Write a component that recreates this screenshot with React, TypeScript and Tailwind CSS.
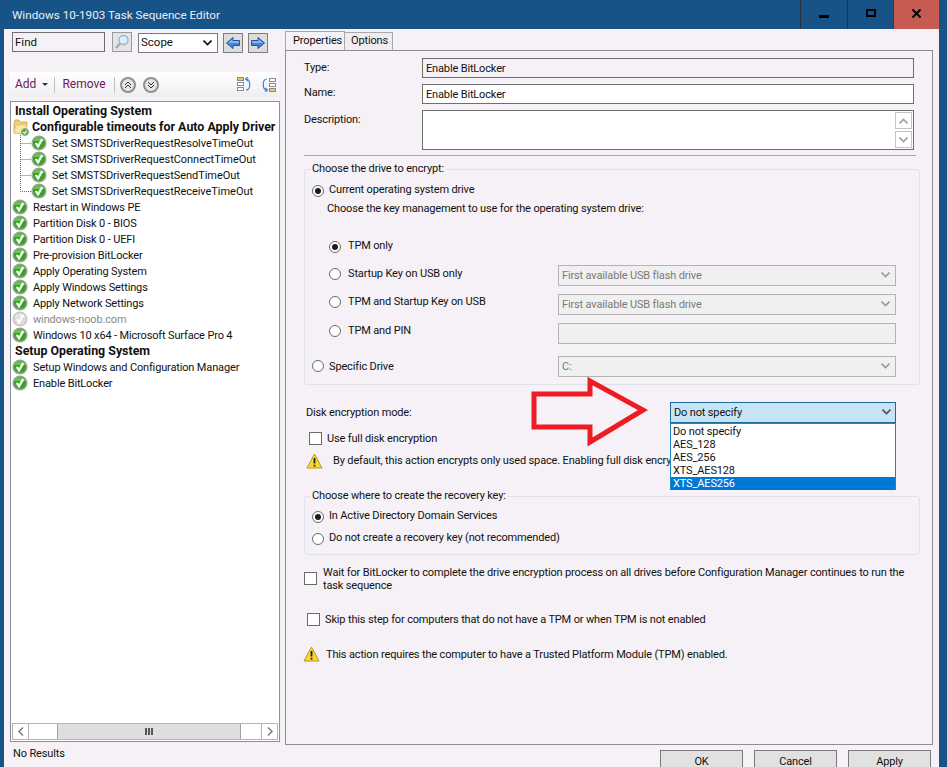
import { ReactNode } from 'react'

const TREE: { label: string; kind: 'head' | 'folder' | 'child' | 'item' | 'off'; last?: boolean }[] = [
  { label: 'Install Operating System', kind: 'head' },
  { label: 'Configurable timeouts for Auto Apply Driver', kind: 'folder' },
  { label: 'Set SMSTSDriverRequestResolveTimeOut', kind: 'child' },
  { label: 'Set SMSTSDriverRequestConnectTimeOut', kind: 'child' },
  { label: 'Set SMSTSDriverRequestSendTimeOut', kind: 'child' },
  { label: 'Set SMSTSDriverRequestReceiveTimeOut', kind: 'child', last: true },
  { label: 'Restart in Windows PE', kind: 'item' },
  { label: 'Partition Disk 0 - BIOS', kind: 'item' },
  { label: 'Partition Disk 0 - UEFI', kind: 'item' },
  { label: 'Pre-provision BitLocker', kind: 'item' },
  { label: 'Apply Operating System', kind: 'item' },
  { label: 'Apply Windows Settings', kind: 'item' },
  { label: 'Apply Network Settings', kind: 'item' },
  { label: 'windows-noob.com', kind: 'off' },
  { label: 'Windows 10 x64 - Microsoft Surface Pro 4', kind: 'item' },
  { label: 'Setup Operating System', kind: 'head' },
  { label: 'Setup Windows and Configuration Manager', kind: 'item' },
  { label: 'Enable BitLocker', kind: 'item' },
]

function CheckIcon({ off }: { off?: boolean }) {
  return (
    <svg width="16" height="16" viewBox="0 0 16 16" className="shrink-0">
      <circle cx="8" cy="8" r="7.6" fill={off ? '#c8c8c8' : '#9aa69a'} />
      <circle cx="8" cy="8" r="6" fill={off ? '#dcdcdc' : '#35a51f'} />
      <path d="M2.6 6 A6 6 0 0 1 13.4 6 Z" fill={off ? '#e8e8e8' : '#6cc653'} />
      <path d="M4.8 8 L7 11.4 L11.2 4.2" fill="none" stroke="#fff" strokeWidth="2.3" />
    </svg>
  )
}

function FolderIcon() {
  return (
    <svg width="16" height="17" viewBox="0 0 16 17" className="shrink-0">
      <path d="M1 4 L1 14 L12 15 L14 6 L14 3 L7 3 L6 1 L2 1 Z" fill="#efcf6e" stroke="#bfa354" strokeWidth="0.8" />
      <path d="M1 14 L3 6 L14 6 L12 15 Z" fill="#f8e7a8" stroke="#d2bb70" strokeWidth="0.5" />
      <circle cx="12" cy="13" r="3.6" fill="#58b043" stroke="#9aa89a" strokeWidth="0.8" />
      <path d="M10.3 13 L11.6 14.6 L13.8 11.6" fill="none" stroke="#fff" strokeWidth="1.1" />
    </svg>
  )
}

function TreeLine({ last }: { last?: boolean }) {
  return (
    <svg width="11" height="16" className="shrink-0 ml-[9px]">
      <path d={last ? 'M0.5 0 V8.5 H11' : 'M0.5 0 V16 M0.5 8.5 H11'} fill="none" stroke="#6a6a6a" strokeDasharray="1 1" />
    </svg>
  )
}

function WarnIcon() {
  return (
    <svg width="17" height="16" viewBox="0 0 17 16" className="shrink-0">
      <path d="M8.5 1 L16 15 L1 15 Z" fill="#f8d92e" stroke="#b8982e" strokeLinejoin="round" />
      <path d="M8.5 5 V10.5 M8.5 11.8 V13.5" stroke="#222" strokeWidth="1.8" />
    </svg>
  )
}

function Radio({ on, className = '' }: { on?: boolean; className?: string }) {
  return (
    <span className={`w-[12px] h-[12px] rounded-full border border-[#6b6b6b] bg-white flex items-center justify-center shrink-0 ${className}`}>
      {on && <span className="w-[6px] h-[6px] rounded-full bg-[#1c1c1c]" />}
    </span>
  )
}

function Checkbox() {
  return <span className="block w-[13px] h-[13px] border border-[#6b6b6b] bg-white shrink-0" />
}

function Chevron({ color = '#7a7a7a' }: { color?: string }) {
  return (
    <svg width="9" height="6" viewBox="0 0 9 6">
      <path d="M0.5 0.5 L4.5 4.5 L8.5 0.5" fill="none" stroke={color} strokeWidth="1.6" />
    </svg>
  )
}

function DisabledSelect({ value }: { value: string }) {
  return (
    <div className="w-[338px] h-[21px] border border-[#b4b4b4] bg-[#f0f0f0] flex items-center pl-[3px] pr-[5px] text-[#7a7a7a]">
      <span className="flex-1 pt-[2px]">{value}</span>
      <Chevron color="#9a9a9a" />
    </div>
  )
}

function Row({ children, className }: { children: ReactNode; className: string }) {
  return <div className={`flex items-center ${className}`}>{children}</div>
}

function NavArrow({ dir }: { dir: 'l' | 'r' }) {
  return (
    <div className="w-[20px] h-[20px] border border-[#7d7d7d] bg-[#dcdcdc] flex items-center justify-center">
      <svg width="14" height="12" viewBox="0 0 14 12" className={dir === 'r' ? '' : '-scale-x-100'}>
        <path d="M0.5 3.5 H7 V0.5 L13.5 6 L7 11.5 V8.5 H0.5 Z" fill="#3f86e0" stroke="#2a4f96" />
        <path d="M1 4 H7.5 V2 L12 6 H1 Z" fill="#7fb4ee" />
      </svg>
    </div>
  )
}

function RoundBtn({ up }: { up?: boolean }) {
  return (
    <span className="w-[16px] h-[16px] rounded-full border-2 border-[#909090] bg-[#e6e6e6] flex items-center justify-center">
      <svg width="8" height="8" viewBox="0 0 8 8" className={up ? '' : 'rotate-180'}>
        <path d="M1 4 L4 1 L7 4 M1 7 L4 4 L7 7" fill="none" stroke="#333" strokeWidth="1" />
      </svg>
    </span>
  )
}

function ListOrderIcon({ flip }: { flip?: boolean }) {
  return (
    <svg width="15" height="15" viewBox="0 0 15 15" className={flip ? 'rotate-180' : ''}>
      <rect x="0.5" y="0.5" width="6" height="3" fill="#f0c85a" stroke="#8a8a8a" />
      <rect x="0.5" y="5.5" width="6" height="3" fill="#fff" stroke="#8a8a8a" />
      <rect x="0.5" y="10.5" width="6" height="3" fill="#fff" stroke="#8a8a8a" />
      <path d="M9 2 C14 2 14 13 9 13 M11 0 L8.5 2 L11 4" fill="none" stroke="#2f86d8" strokeWidth="1.2" />
    </svg>
  )
}

function LeftPane() {
  return (
    <div className="w-[275px] ml-[6px] shrink-0 flex flex-col">
      <div className="flex items-start pt-[3px] pl-[2px] h-[43px] text-[11.5px] tracking-normal">
        <div className="w-[93px] h-[20px] border border-[#6f6f6f] bg-[#f5f1f6] pl-[2px] leading-[18px]">Find</div>
        <div className="w-[20px] h-[20px] ml-[7px] border border-[#9a9a9a] bg-[#e4e4e4] flex items-center justify-center">
          <svg width="16" height="16" viewBox="0 0 16 16">
            <circle cx="9.5" cy="6" r="4.5" fill="#dbeefb" stroke="#9fb6c8" strokeWidth="1.4" />
            <path d="M6 9.5 L2 14" stroke="#a8a8a8" strokeWidth="2.2" />
          </svg>
        </div>
        <div className="w-[80px] h-[20px] ml-[6px] mt-[1px] border border-[#7a7a7a] bg-white flex items-center pl-[2px] pr-[5px]">
          <span className="flex-1">Scope</span>
          <Chevron color="#111" />
        </div>
        <div className="ml-[5px] mt-[1px]"><NavArrow dir="l" /></div>
        <div className="ml-[5px] mt-[1px]"><NavArrow dir="r" /></div>
      </div>
      <div className="h-[25px] w-[268px] flex items-center bg-gradient-to-b from-white to-[#f0edf1] pl-[5px] text-[12px] tracking-normal">
        <span className="text-[#6a1b5c] pb-[2px]">Add</span>
        <svg width="6" height="4" className="ml-[6px]"><path d="M0 0 H6 L3 3 Z" fill="#333" /></svg>
        <span className="w-px h-[16px] bg-[#c2c2c2] ml-[6px]" />
        <span className="text-[#6a1b5c] ml-[7px] pb-[2px]">Remove</span>
        <span className="w-px h-[16px] bg-[#c2c2c2] ml-[8px]" />
        <span className="ml-[5px]"><RoundBtn up /></span>
        <span className="ml-[7px]"><RoundBtn /></span>
        <span className="flex-1" />
        <ListOrderIcon />
        <span className="ml-[9px] mr-[2px]"><ListOrderIcon flip /></span>
      </div>
      <div className="mt-[4px] w-[270px] h-[641px] border border-[#8f8f9c] bg-white flex flex-col">
        <div className="flex-1 pt-[1px] overflow-hidden">
          {TREE.map((t) => (
            <div key={t.label} className="h-[16px] flex items-center whitespace-nowrap">
              {t.kind === 'head' && <span className="ml-[4px] font-bold text-[12.4px] tracking-normal">{t.label}</span>}
              {t.kind === 'folder' && (
                <>
                  <span className="ml-[2px]"><FolderIcon /></span>
                  <span className="ml-[3px] font-bold text-[12.4px] tracking-normal">{t.label}</span>
                </>
              )}
              {t.kind === 'child' && (
                <>
                  <TreeLine last={t.last} />
                  <CheckIcon />
                  <span className="ml-[5px] pt-[2px] tracking-[-0.05px]">{t.label}</span>
                </>
              )}
              {(t.kind === 'item' || t.kind === 'off') && (
                <>
                  <span className="ml-[1px]"><CheckIcon off={t.kind === 'off'} /></span>
                  <span className={`ml-[5px] pt-[2px] ${t.kind === 'off' ? 'text-[#8a8a8a]' : ''}`}>{t.label}</span>
                </>
              )}
            </div>
          ))}
        </div>
        <div className="h-[17px] mx-[1px] mb-[1px] border border-[#b4b4b4] flex">
          <div className="w-[16px] border-r border-[#b4b4b4] flex items-center justify-center">
            <svg width="6" height="9"><path d="M5 0.5 L1 4.5 L5 8.5" fill="none" stroke="#777" strokeWidth="1.4" /></svg>
          </div>
          <div className="w-[28px]" />
          <div className="w-[184px] bg-[#dedede] border-x border-[#a0a0a0] flex items-center justify-center gap-px">
            <span className="w-[2px] h-[7px] bg-[#555]" /><span className="w-[2px] h-[7px] bg-[#555]" /><span className="w-[2px] h-[7px] bg-[#555]" />
          </div>
          <div className="flex-1" />
          <div className="w-[16px] border-l border-[#b4b4b4] flex items-center justify-center">
            <svg width="6" height="9"><path d="M1 0.5 L5 4.5 L1 8.5" fill="none" stroke="#777" strokeWidth="1.4" /></svg>
          </div>
        </div>
      </div>
      <div className="ml-[3px] mt-[4px]">No Results</div>
    </div>
  )
}

function RightPane() {
  return (
    <div className="relative w-[648px] shrink-0 flex flex-col">
      <div className="flex h-[21px] pt-[2px] shrink-0">
        <div className="w-[60px] h-[19px] border-t border-x border-[#a8a8a8] bg-[#f5f1f6] pl-[7px] leading-[17px] relative z-10 -mb-px">Properties</div>
        <div className="w-[48px] h-[18px] mt-[1px] border-t border-r border-[#a8a8a8] bg-[#f0ecf1] pl-[6px] leading-[16px]">Options</div>
      </div>
      <div className="h-[695px] shrink-0 border border-[#8f8f8f] bg-[#f5f1f6] pl-[18px] pt-[7px] relative">
        <Row className="h-[20px]">
          <span className="w-[118px]">Type:</span>
          <div className="w-[492px] h-[20px] border border-[#6f6f6f] pl-[3px] leading-[20px]">Enable BitLocker</div>
        </Row>
        <Row className="h-[20px] mt-[6px]">
          <span className="w-[118px] -mt-[2px]">Name:</span>
          <div className="w-[492px] h-[20px] border border-[#6f6f6f] bg-white pl-[3px] leading-[20px]">Enable BitLocker</div>
        </Row>
        <div className="flex mt-[6px]">
          <span className="w-[118px] mt-[2px]">Description:</span>
          <div className="w-[492px] h-[40px] border border-[#6f6f6f] bg-white flex justify-end pt-[1px] pr-[1px]">
            <div className="w-[17px] h-[36px] flex flex-col gap-[2px]">
              <div className="flex-1 border border-[#c4c4c4] flex items-center justify-center"><span className="rotate-180 flex"><Chevron color="#a0a0a0" /></span></div>
              <div className="flex-1 border border-[#c4c4c4] flex items-center justify-center"><Chevron color="#a0a0a0" /></div>
            </div>
          </div>
        </div>
        <div className="w-[612px] h-px bg-[#a8a8a8] mt-[5px]" />
        <fieldset className="w-[616px] h-[224px] mt-[5px] border border-[#dde2ec] rounded-[3px] pl-[7px]">
          <legend className="px-[1px] ml-[-1px]">Choose the drive to encrypt:</legend>
          <Row className="mt-[5px] h-[16px] gap-[5px]"><Radio on />Current operating system drive</Row>
          <div className="mt-[2px] ml-[15px] h-[16px] leading-[16px]">Choose the key management to use for the operating system drive:</div>
          <Row className="mt-[22px] h-[16px] ml-[17px] gap-[7px]"><Radio on />TPM only</Row>
          <Row className="mt-[10px] h-[21px] ml-[17px] gap-[7px]">
            <Radio className="-mt-[2px]" /><span className="w-[203px] -mt-[1px]">Startup Key on USB only</span>
            <DisabledSelect value="First available USB flash drive" />
          </Row>
          <Row className="mt-[8px] h-[21px] ml-[17px] gap-[7px]">
            <Radio className="-mt-[4px]" /><span className="w-[203px] -mt-[4px]">TPM and Startup Key on USB</span>
            <DisabledSelect value="First available USB flash drive" />
          </Row>
          <Row className="mt-[8px] h-[21px] ml-[17px] gap-[7px]">
            <Radio className="-mt-[4px]" /><span className="w-[203px] -mt-[4px]">TPM and PIN</span>
            <div className="w-[338px] h-[21px] border border-[#b4b4b4] bg-[#f0f0f0]" />
          </Row>
          <Row className="mt-[12px] h-[21px] gap-[5px]">
            <Radio /><span className="w-[224px] pt-[2px]">Specific Drive</span>
            <DisabledSelect value="C:" />
          </Row>
        </fieldset>

        <Row className="mt-[17px] h-[20px] pl-[2px]">
          <span className="w-[364px] pt-[2px]">Disk encryption mode:</span>
          <div className="relative w-[226px] h-[21px] border border-[#1c6a99] bg-[#c6e4f6] flex items-center pl-[3px] pr-[4px]">
            <span className="flex-1 pt-[2px]">Do not specify</span>
            <Chevron color="#555" />
            <div className="absolute left-[-1px] top-[20px] w-[226px] h-[67px] border border-[#1c88c9] bg-white pt-[1px] z-10 leading-[13px]">
              <div className="h-[13px] pl-[2px]">Do not specify</div>
              <div className="h-[13px] pl-[2px]">AES_128</div>
              <div className="h-[13px] pl-[2px]">AES_256</div>
              <div className="h-[13px] pl-[2px]">XTS_AES128</div>
              <div className="h-[13px] pl-[2px] bg-[#0078d7] text-white">XTS_AES256</div>
            </div>
          </div>
        </Row>
        <Row className="mt-[8px] h-[16px] pl-[5px] gap-[5px]"><Checkbox /><span className="pt-[2px]">Use full disk encryption</span></Row>
        <Row className="mt-[6px] h-[18px] pl-[2px] whitespace-nowrap">
          <WarnIcon />
          <span className="ml-[10px]">By default, this action encrypts only used space. Enabling full disk encry</span>
        </Row>

        <fieldset className="w-[616px] h-[67px] mt-[18px] border border-[#dde2ec] rounded-[3px] pl-[7px]">
          <legend className="px-[1px] ml-[-1px]">Choose where to create the recovery key:</legend>
          <Row className="mt-[4px] h-[16px] gap-[5px]"><Radio on />In Active Directory Domain Services</Row>
          <Row className="mt-[6px] h-[16px] gap-[5px]"><Radio />Do not create a recovery key (not recommended)</Row>
        </fieldset>

        <div className="flex mt-[11px] w-[612px]">
          <span className="mt-[6px]"><Checkbox /></span>
          <span className="ml-[6px] leading-[13px]">Wait for BitLocker to complete the drive encryption process on all drives before Configuration Manager continues to run the task sequence</span>
        </div>
        <Row className="mt-[19px] h-[16px] pl-[3px] gap-[5px]"><Checkbox /><span className="pt-[2px]">Skip this step for computers that do not have a TPM or when TPM is not enabled</span></Row>
        <Row className="mt-[18px] h-[18px] -ml-[1px] gap-[6px]"><WarnIcon /><span className="pt-[2px]">This action requires the computer to have a Trusted Platform Module (TPM) enabled.</span></Row>

        <svg width="118" height="70" viewBox="0 0 118 70" className="absolute left-[245px] top-[326px] z-10">
          <path d="M3 17 H59 V4 L112 33 L59 65 V50 H3 Z" fill="none" stroke="#ed1c24" strokeWidth="5" />
        </svg>
      </div>
      <div className="flex shrink-0 mt-[5px] ml-[375px] gap-[11px]">
        <div className="w-[83px] h-[24px] border border-[#7a7a7a] bg-[#e1e1e1] text-center leading-[22px]">OK</div>
        <div className="w-[83px] h-[24px] border border-[#7a7a7a] bg-[#e1e1e1] text-center leading-[22px]">Cancel</div>
        <div className="w-[83px] h-[24px] border border-[#7a7a7a] bg-[#e1e1e1] text-center leading-[22px]">Apply</div>
      </div>
    </div>
  )
}

export default function App() {
  return (
    <div className="w-[947px] h-[767px] overflow-hidden bg-[#175387] flex flex-col text-[11px] tracking-[-0.15px] text-[#111] font-['Roboto',sans-serif]">
      <div className="h-[29px] shrink-0 flex items-start pr-[8px]">
        <span className="ml-[12px] mt-[6px] text-[#e8eef5] flex-1 leading-[18px] text-[11.7px] tracking-normal">Windows 10-1903 Task Sequence Editor</span>
        <div className="w-[47px] h-[30px] border-l border-b border-[#2a2f38] flex items-center justify-center">
          <span className="w-[10px] h-[3px] bg-black mt-[3px]" />
        </div>
        <div className="w-[46px] h-[30px] border-l border-b border-[#2a2f38] flex items-center justify-center">
          <span className="w-[10px] h-[8px] border-2 border-black -mt-[3px]" />
        </div>
        <div className="w-[46px] h-[30px] bg-[#c75b52] border-l border-b border-[#5a2a2a] flex items-center justify-center">
          <svg width="9" height="9" className="-mt-[3px]"><path d="M0.5 0.5 L8.5 8.5 M8.5 0.5 L0.5 8.5" stroke="#000" strokeWidth="2" /></svg>
        </div>
      </div>
      <div className="ml-[4px] mr-[8px] flex-1 bg-[#f5f1f6] flex min-h-0">
        <LeftPane />
        <RightPane />
      </div>
    </div>
  )
}
